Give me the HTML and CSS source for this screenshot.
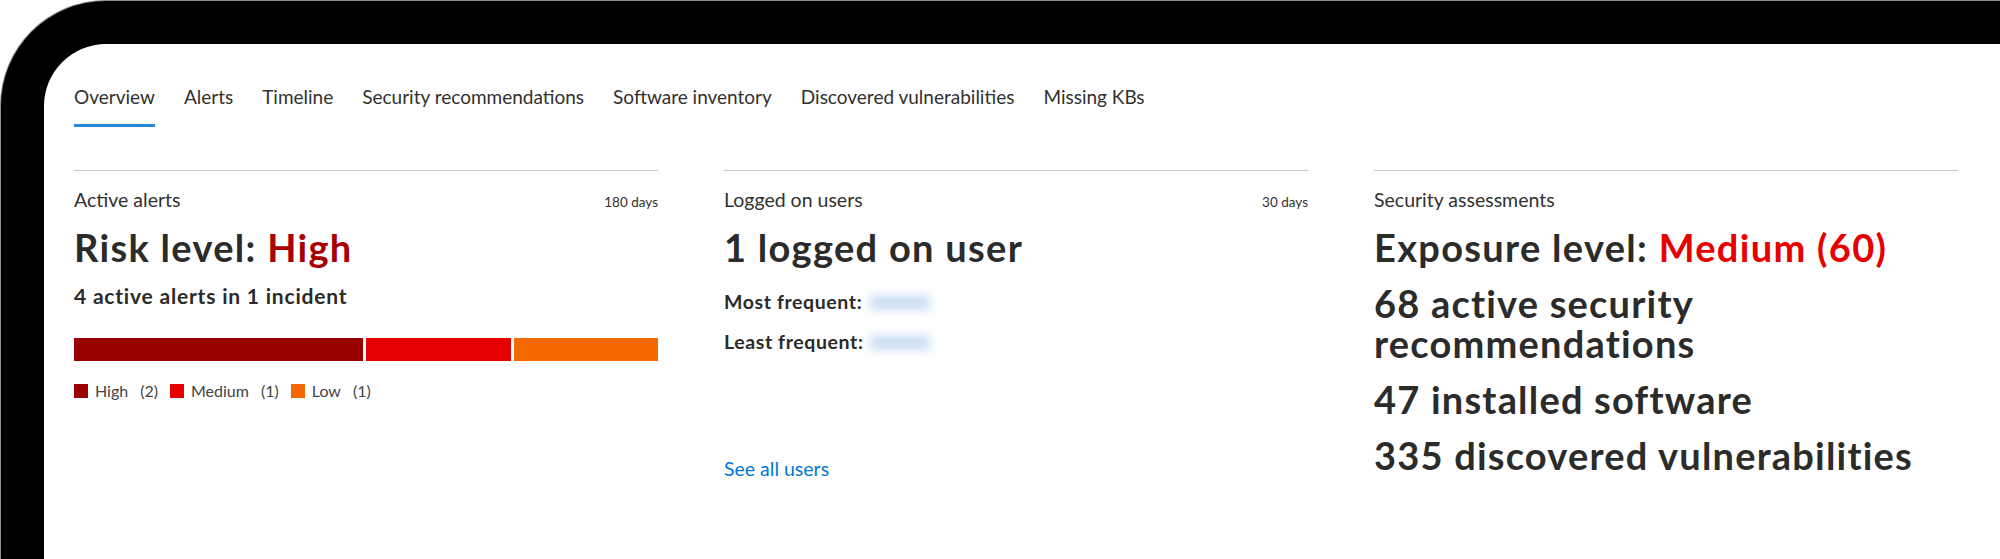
FILE: index.html
```html
<!DOCTYPE html>
<html lang="en">
<head>
<meta charset="utf-8">
<title>Device page overview</title>
<link rel="stylesheet" href="styles.css">
</head>
<body>
<div class="frame">
  <div class="screen">
    <nav class="tabs">
      <a class="tab active">Overview</a>
      <a class="tab">Alerts</a>
      <a class="tab">Timeline</a>
      <a class="tab">Security recommendations</a>
      <a class="tab">Software inventory</a>
      <a class="tab">Discovered vulnerabilities</a>
      <a class="tab">Missing KBs</a>
    </nav>
    <div class="cards">
      <section class="card">
        <div class="card-head"><span class="card-title">Active alerts</span><span class="card-range">180 days</span></div>
        <h2 class="headline">Risk level: <span class="sev-high">High</span></h2>
        <p class="sub">4 active alerts in 1 incident</p>
        <div class="bar">
          <span class="seg seg-high" style="flex-grow:2"></span>
          <span class="seg seg-medium" style="flex-grow:1"></span>
          <span class="seg seg-low" style="flex-grow:1"></span>
        </div>
        <ul class="legend">
          <li><span class="swatch seg-high"></span>High<span class="count">(2)</span></li>
          <li><span class="swatch seg-medium"></span>Medium<span class="count">(1)</span></li>
          <li><span class="swatch seg-low"></span>Low<span class="count">(1)</span></li>
        </ul>
      </section>
      <section class="card">
        <div class="card-head"><span class="card-title">Logged on users</span><span class="card-range">30 days</span></div>
        <h2 class="headline">1 logged on user</h2>
        <div class="user-row"><span class="user-label">Most frequent:</span><span class="blurred"></span></div>
        <div class="user-row"><span class="user-label">Least frequent:</span><span class="blurred"></span></div>
        <a class="link">See all users</a>
      </section>
      <section class="card">
        <div class="card-head"><span class="card-title">Security assessments</span></div>
        <h2 class="headline">Exposure level: <span class="sev-medium">Medium (60)</span></h2>
        <p class="stat">68 active security recommendations</p>
        <p class="stat">47 installed software</p>
        <p class="stat">335 discovered vulnerabilities</p>
      </section>
    </div>
  </div>
</div>
</body>
</html>
```
FILE: styles.css
```css
* { box-sizing: border-box; }
html, body { margin: 0; padding: 0; background: #fff; overflow: hidden; }
body { font-family: "Lato", "Open Sans", sans-serif; color: #323130; }

.frame {
  margin: 1px 0 0 1px;
  width: 1999px;
  height: 558px;
  border-top: 43px solid #000;
  border-left: 43px solid #000;
  border-radius: 105px 0 0 0;
  box-shadow: 0 0 0 1px #8c8c8c;
  background: #fff;
  overflow: hidden;
}
.screen { padding: 36px 0 0 30px; }

.tabs { display: flex; gap: 29px; }
.tab {
  font-size: 19px;
  line-height: 34px;
  color: #323130;
  padding-bottom: 10px;
  border-bottom: 3px solid transparent;
  cursor: pointer;
}
.tab.active { border-bottom-color: #2b88d8; }

.cards {
  display: grid;
  grid-template-columns: 584px 584px 584px;
  column-gap: 66px;
  margin-top: 43px;
}
.card { border-top: 1px solid #c8c6c4; }
.card-head {
  display: flex;
  justify-content: space-between;
  align-items: baseline;
  padding-top: 17px;
}
.card-title { font-size: 19.5px; line-height: 24px; color: #323130; }
.card-range { font-size: 13.5px; color: #323130; }

.headline {
  margin: 15px 0 0;
  font-size: 38px;
  line-height: 40px;
  letter-spacing: 1.3px;
  font-weight: 700;
  color: #2b2b2b;
}
.sev-high { color: #a80000; }
.sev-medium { color: #e60000; }

.sub {
  margin: 15px 0 0;
  font-size: 21px;
  line-height: 28px;
  letter-spacing: 0.8px;
  font-weight: 700;
  color: #2b2b2b;
}

.bar { display: flex; gap: 3px; height: 23px; margin-top: 28px; }
.seg { display: block; flex-basis: 0; }
.seg-high { background: #990000; }
.seg-medium { background: #e60000; }
.seg-low { background: #f56a00; }

.legend {
  list-style: none;
  margin: 19px 0 0;
  padding: 0;
  display: flex;
  gap: 12px;
  font-size: 16px;
  line-height: 22px;
  color: #444;
}
.legend li { display: flex; align-items: center; }
.swatch { width: 14px; height: 14px; margin-right: 7px; }
.count { margin-left: 12px; }

.user-row {
  display: flex;
  align-items: center;
  margin-top: 12px;
  font-size: 19.5px;
  line-height: 28px;
  letter-spacing: 0.6px;
  font-weight: 700;
  color: #2b2b2b;
}
.headline + .user-row { margin-top: 21px; }
.user-label { width: 146px; white-space: nowrap; }
.blurred {
  width: 60px;
  height: 15px;
  background: #b9d3f0;
  filter: blur(4px);
  opacity: 0.7;
}
.link {
  display: block;
  margin-top: 101px;
  font-size: 19.5px;
  line-height: 24px;
  color: #0078d4;
  cursor: pointer;
}

.stat {
  margin: 16px 0 0;
  font-size: 38px;
  line-height: 40px;
  letter-spacing: 1.2px;
  font-weight: 700;
  color: #2b2b2b;
}
```
